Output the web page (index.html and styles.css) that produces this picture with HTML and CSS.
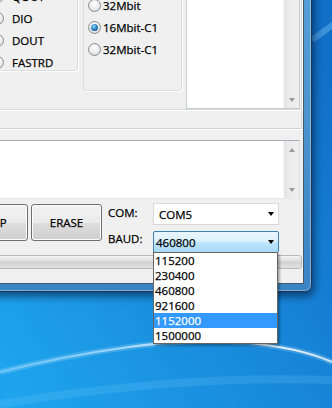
FILE: index.html
```html
<!DOCTYPE html>
<html lang="en">
<head>
    <meta charset="UTF-8">
    <meta name="viewport" content="width=device-width, initial-scale=1.0">
    <link rel="stylesheet" href="styles.css">
    <title>Flash Download Tool</title>
</head>
<body>
    <svg class="desktop" width="332" height="408" viewBox="0 0 332 408">
        <defs>
            <linearGradient id="sky" x1="0" y1="1" x2="1" y2="0.2">
                <stop offset="0" stop-color="#1fa6ef"/>
                <stop offset="1" stop-color="#1270c8"/>
            </linearGradient>
            <linearGradient id="swoosh" x1="0" y1="0" x2="1" y2="0">
                <stop offset="0" stop-color="#9fdcff" stop-opacity=".45"/>
                <stop offset=".75" stop-color="#ffffff" stop-opacity=".95"/>
                <stop offset="1" stop-color="#ffffff" stop-opacity=".7"/>
            </linearGradient>
        </defs>
        <rect width="332" height="408" fill="url(#sky)"/>
        <path d="M0,404 C100,388 210,376 332,380" fill="none" stroke="#7fd0ff" stroke-opacity=".18" stroke-width="8"/>
        <path d="M0,372 C80,352 180,336 240,342 C285,346 312,353 332,362" fill="none" stroke="#bfe9ff" stroke-opacity=".22" stroke-width="6"/>
        <path d="M0,372 C80,352 180,336 240,342 C285,346 312,353 332,362" fill="none" stroke="url(#swoosh)" stroke-width="2.2"/>
        <path d="M312,40 L334,24" fill="none" stroke="#6cbcf0" stroke-opacity=".45" stroke-width="6"/>
    </svg>

    <div class="window">
        <div class="client">
            <div class="top-panel">
                <div class="group mode-group">
                    <div class="radio-row"><span class="radio"></span>QOUT</div>
                    <div class="radio-row"><span class="radio"></span>DIO</div>
                    <div class="radio-row"><span class="radio"></span>DOUT</div>
                    <div class="radio-row"><span class="radio"></span>FASTRD</div>
                </div>
                <div class="group size-group">
                    <div class="radio-row"><span class="radio"></span>32Mbit</div>
                    <div class="radio-row"><span class="radio checked"></span>16Mbit-C1</div>
                    <div class="radio-row"><span class="radio"></span>32Mbit-C1</div>
                </div>
                <div class="listbox">
                    <div class="list-area"></div>
                    <div class="scrollbar">
                        <span class="scroll-btn"><span class="arrow-down"></span></span>
                    </div>
                </div>
            </div>

            <div class="tab-strip"></div>

            <div class="log-box">
                <div class="log-text"></div>
                <div class="scrollbar split">
                    <span class="scroll-btn"><span class="arrow-up"></span></span>
                    <span class="scroll-btn"><span class="arrow-down"></span></span>
                </div>
            </div>

            <div class="controls">
                <button class="btn stop-btn">STOP</button>
                <button class="btn">ERASE</button>
                <div class="port-form">
                    <span class="form-label">COM:</span>
                    <div class="combo"><span>COM5</span><span class="combo-arrow"></span></div>
                    <span class="form-label baud-label">BAUD:</span>
                    <div class="combo combo-open"><span>460800</span><span class="combo-arrow"></span></div>
                </div>
            </div>

            <div class="progress"></div>
        </div>
    </div>

    <ul class="dropdown">
        <li>115200</li>
        <li>230400</li>
        <li>460800</li>
        <li>921600</li>
        <li class="selected">1152000</li>
        <li>1500000</li>
    </ul>
</body>
</html>
```

FILE: styles.css
```css
body {
    font-family: "Open Sans", "Noto Sans", sans-serif;
    font-size: 11.5px;
    color: #000;
    -webkit-text-stroke: 0.25px currentColor;
    margin: 0;
    padding: 0;
    width: 332px;
    height: 408px;
    overflow: hidden;
    position: relative;
}

.desktop {
    position: absolute;
    top: 0;
    left: 0;
    display: block;
}

/* window on the desktop */
.window {
    position: absolute;
    left: -20px;
    top: -40px;
    width: 332px;
    height: 332px;
    box-sizing: border-box;
    padding: 7px;
    border: 1px solid #1b3554;
    border-radius: 0 0 7px 7px;
    background: linear-gradient(#5aa2da, #3a84c4);
    box-shadow: 2px 4px 9px rgba(0, 15, 45, 0.6), inset 0 0 0 1px rgba(255, 255, 255, 0.35);
}

.client {
    height: 100%;
    box-sizing: border-box;
    border: 1px solid #46596d;
    background-color: #f0f0f0;
    overflow: hidden;
    display: flex;
    flex-direction: column;
}

.top-panel {
    height: 140px;
    flex: 0 0 auto;
    display: flex;
    align-items: flex-start;
    margin-right: 1px;
    border-right: 1px solid #d9d9d9;
    border-bottom: 1px solid #d9d9d9;
    box-shadow: 1px 1px 0 #fff;
}

.group {
    box-sizing: border-box;
    border: 1px solid #d5dfe5;
    border-radius: 3px;
    box-shadow: 1px 1px 0 #fff;
    margin-top: 11px;
    display: flex;
    flex-direction: column;
    gap: 6px;
}

.mode-group {
    width: 89px;
    padding: 7px 0 0 1px;
}

.mode-group .radio {
    margin-right: 8px;
}

.size-group {
    width: 99px;
    margin-left: 5px;
    padding: 16px 0 33px 4px;
}

.size-group .radio {
    margin-right: 2px;
}

.radio-row {
    height: 16px;
    display: flex;
    align-items: center;
    white-space: nowrap;
}

.radio {
    width: 13px;
    height: 13px;
    box-sizing: border-box;
    border-radius: 50%;
    border: 1px solid #8a8c8e;
    background: radial-gradient(circle at 50% 35%, #ffffff 0, #f0f0f0 45%, #cfcfcf 100%);
    display: flex;
    align-items: center;
    justify-content: center;
    flex: 0 0 auto;
}

.radio.checked::after {
    content: "";
    width: 7px;
    height: 7px;
    border-radius: 50%;
    background: radial-gradient(circle at 40% 35%, #9bdcfb 0, #2f86c8 45%, #123f6b 100%);
}

.listbox {
    align-self: stretch;
    width: 114px;
    margin-left: 4px;
    box-sizing: border-box;
    border: 1px solid #c9ccd2;
    background-color: #fff;
    display: flex;
}

.list-area {
    flex: 1;
}

.scrollbar {
    width: 16px;
    flex: 0 0 16px;
    background: linear-gradient(90deg, #e3e3e3, #ececec 40%, #efefef);
    border-left: 1px solid #f7f7f7;
    box-sizing: border-box;
    display: flex;
    flex-direction: column;
    justify-content: flex-end;
}

.scrollbar.split {
    justify-content: space-between;
}

.scroll-btn {
    height: 17px;
    display: flex;
    align-items: center;
    justify-content: center;
}

.arrow-down {
    width: 0;
    height: 0;
    border-left: 3.5px solid transparent;
    border-right: 3.5px solid transparent;
    border-top: 4px solid #9a9a9a;
}

.arrow-up {
    width: 0;
    height: 0;
    border-left: 3.5px solid transparent;
    border-right: 3.5px solid transparent;
    border-bottom: 4px solid #9a9a9a;
}

.tab-strip {
    height: 18px;
    flex: 0 0 auto;
    margin-right: 1px;
    border-right: 1px solid #d9d9d9;
    border-bottom: 1px solid #d0d0d0;
    box-shadow: 0 1px 0 #fff;
}

.log-box {
    height: 59px;
    flex: 0 0 auto;
    margin: 11px 3px 0 0;
    box-sizing: border-box;
    border: 1px solid;
    border-color: #abadb3 #dbdfe6 #e3e9ef #e2e3ea;
    background-color: #fff;
    display: flex;
}

.log-text {
    flex: 1;
}

.controls {
    height: 50px;
    flex: 0 0 auto;
    margin: 4px 0 0 -32px;
    display: flex;
    align-items: flex-start;
}

.btn {
    width: 71px;
    height: 37px;
    margin-top: 1px;
    flex: 0 0 auto;
    font-family: inherit;
    font-size: 11.5px;
    color: #000;
    border: 1px solid #707070;
    border-radius: 3px;
    background: linear-gradient(#f2f2f2 0%, #ebebeb 50%, #dddddd 51%, #cfcfcf 100%);
    box-shadow: inset 0 0 0 1px #fcfcfc;
    padding: 0;
}

.stop-btn {
    margin-right: 3px;
}

.port-form {
    margin-left: 6px;
    display: grid;
    grid-template-columns: 45px 126px;
    grid-template-rows: 22px 22px;
    row-gap: 6px;
}

.form-label {
    line-height: 20px;
}

.baud-label {
    line-height: 16px;
}

.combo {
    box-sizing: border-box;
    border: 1px solid #d9d9d9;
    background-color: #fff;
    display: flex;
    align-items: center;
    justify-content: space-between;
    padding: 0 4px 0 5px;
}

.combo-open {
    border-color: #3c7fb1;
    background: linear-gradient(#eaf6fd 0%, #d9f0fc 50%, #bee6fd 51%, #a7d9f5 100%);
    padding-left: 2px;
    border-radius: 2px;
}

.combo-arrow {
    width: 0;
    height: 0;
    border-left: 3.5px solid transparent;
    border-right: 3.5px solid transparent;
    border-top: 4px solid #000;
}

.progress {
    height: 14px;
    flex: 0 0 auto;
    margin: 2px 1px 0 -4px;
    box-sizing: border-box;
    border: 1px solid #b8b8b8;
    border-radius: 3px;
    background: linear-gradient(#f4f4f4 0%, #e6e6e6 30%, #d2d2d2 55%, #e2e2e2 100%);
}

/* open BAUD list, drawn over the window */
.dropdown {
    position: absolute;
    left: 153px;
    top: 252px;
    width: 125px;
    margin: 0;
    padding: 0;
    list-style: none;
    box-sizing: border-box;
    border: 1px solid #646464;
    background-color: #fff;
    box-shadow: 2px 2px 2px rgba(0, 0, 0, 0.3);
}

.dropdown li {
    height: 15px;
    line-height: 15px;
    padding-left: 1px;
}

.dropdown li.selected {
    background-color: #3399ff;
    color: #fff;
}
```
